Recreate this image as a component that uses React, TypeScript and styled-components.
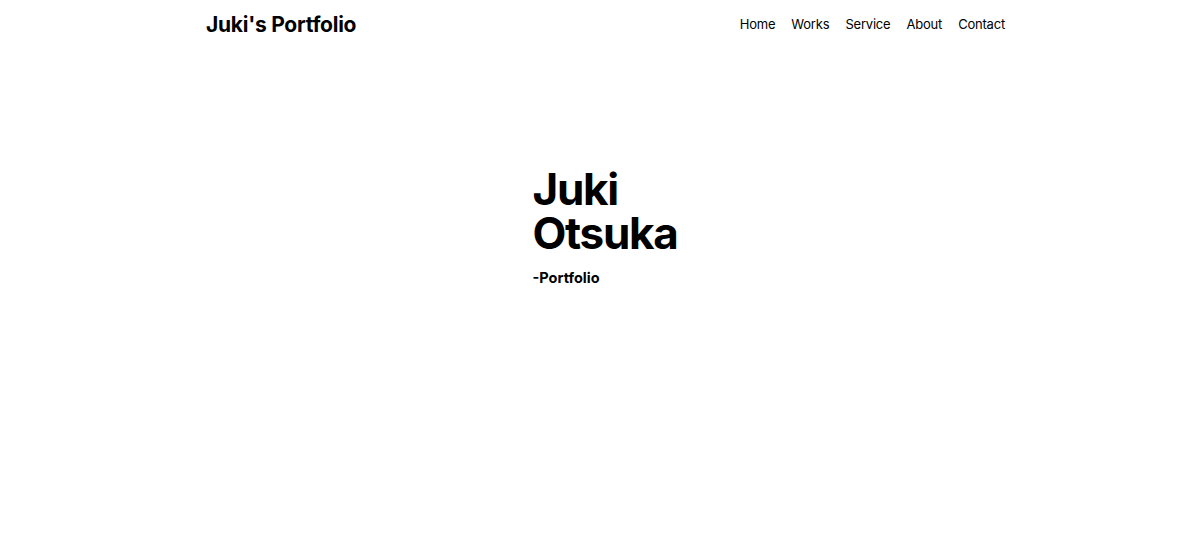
import React from "react";
import styled, { createGlobalStyle } from "styled-components";

const GlobalStyle = createGlobalStyle`
  * { box-sizing: border-box; }
  body {
    margin: 0;
    font-family: Inter, "Noto Sans", sans-serif;
    color: #000;
    background: #fff;
  }
`;

const Header = styled.header`
  width: 800px;
  margin: 0 auto;
  transform: translateX(6px);
  height: 48px;
  display: flex;
  align-items: center;
  justify-content: space-between;
`;

const Logo = styled.h1`
  margin: 0;
  font-size: 21px;
  font-weight: 700;
  letter-spacing: -0.25px;
`;

const Nav = styled.nav`
  display: flex;
  gap: 16px;
  padding-right: 1px;
`;

const NavLink = styled.a`
  font-size: 13px;
  letter-spacing: -0.2px;
  color: #000;
  text-decoration: none;
`;

const Hero = styled.section`
  display: flex;
  justify-content: center;
  padding: 119px 0 0 10px;
`;

const Title = styled.h2`
  margin: 0;
  font-size: 44px;
  line-height: 44px;
  font-weight: 700;
  letter-spacing: -1.3px;
`;

const Sub = styled.p`
  margin: 14px 0 0;
  font-size: 14.5px;
  font-weight: 700;
`;

export default function App() {
  const links = ["Home", "Works", "Service", "About", "Contact"];
  return (
    <>
      <GlobalStyle />
      <Header>
        <Logo>Juki's Portfolio</Logo>
        <Nav>
          {links.map((l) => (
            <NavLink key={l} href="#">{l}</NavLink>
          ))}
        </Nav>
      </Header>
      <Hero>
        <div>
          <Title>Juki<br />Otsuka</Title>
          <Sub>-Portfolio</Sub>
        </div>
      </Hero>
    </>
  );
}
